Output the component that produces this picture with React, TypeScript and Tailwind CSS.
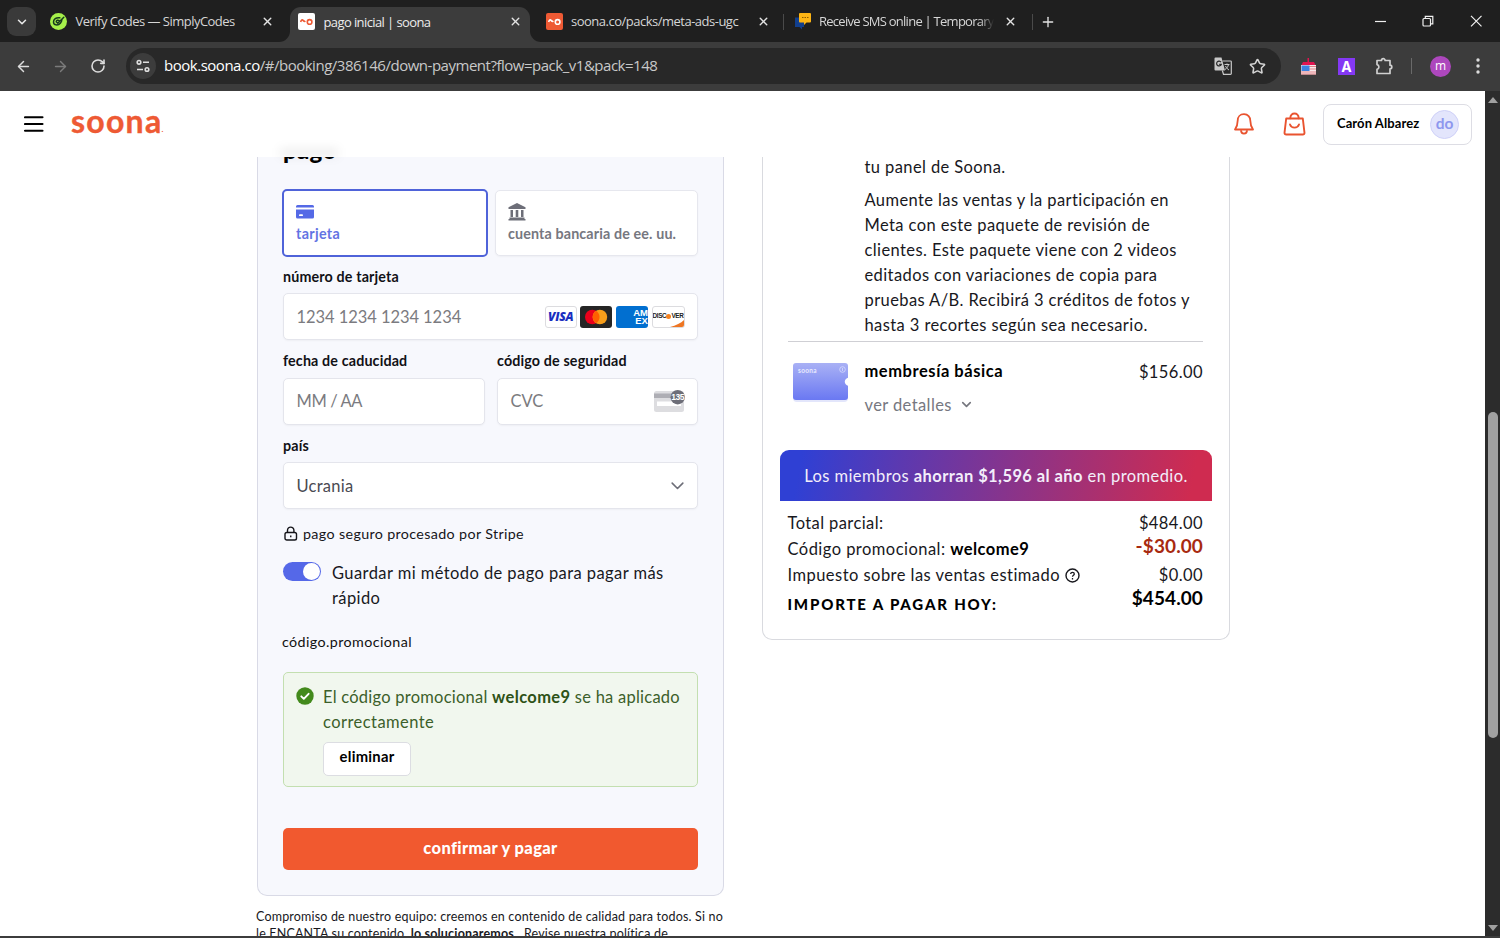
import React from "react";
import { ArrowLeft, ArrowRight, RotateCw, Star, ChevronDown, X, Plus } from "lucide-react";

function SoonaMark({ fg }: { fg: string }) {
  return (
    <svg width="13" height="8" viewBox="0 0 13 8" fill="none" stroke={fg} strokeWidth="1.6">
      <path d="M.6 4C1.400 1.600 2.300 1.500 3.100 2.400S4.500 3.800 5.400 3.200" />
      <circle cx="9.600" cy="3.900" r="2.300" />
    </svg>
  );
}

function TabClose({ className = "" }: { className?: string }) {
  return <X className={"shrink-0 " + className} size={13} strokeWidth={2.6} color="#e3e3e3" />;
}

function TabStrip() {
  return (
    <div className="flex h-[42px] shrink-0 bg-[#1f1f1f] font-['Open_Sans',sans-serif] text-[13px] text-[#d6d6d6]">
      <div className="mt-[7px] ml-[7px] flex h-[29px] w-[29px] shrink-0 items-center justify-center rounded-[9px] bg-[#3a3a3a]">
        <ChevronDown size={14} strokeWidth={2.6} color="#e8e8e8" />
      </div>
      <div className="flex h-[43px] w-[254px] shrink-0 items-center pl-[14px]">
        <svg width="17" height="17" viewBox="0 0 17 17" className="shrink-0">
          <circle cx="8.500" cy="8.500" r="8.500" fill="#a6f04a" />
          <g fill="none" stroke="#173a1e" strokeWidth="1.500" strokeLinecap="round" strokeLinejoin="round">
            <path d="M9.800 4.800C6 4.300 3.500 6.200 3.500 9c0 3.200 4.500 4 6.800 1.200 1-1.300 1.500-2.500 1.500-3.500" />
            <path d="M6.200 8.800l1.600 1.400L13.800 4.300M6.200 8.800c.2-1.600 1.800-2 3-1.200" />
          </g>
        </svg>
        <span className="ml-[8.500px] w-[185.500px] pt-px whitespace-nowrap tracking-[-0.520px]">Verify Codes — SimplyCodes</span>
        <TabClose />
      </div>
      <div className="relative mt-[7px] flex h-[35px] w-[240px] shrink-0 items-center rounded-t-[11px] bg-[#3c3c3c] pb-[5px] pl-2">
        <svg className="absolute bottom-0 left-[-11px]" width="11" height="11" viewBox="0 0 11 11"><path d="M11 0A11 11 0 010 11h11z" fill="#3c3c3c" /></svg>
        <svg className="absolute right-[-11px] bottom-0" width="11" height="11" viewBox="0 0 11 11"><path d="M0 0a11 11 0 0011 11H0z" fill="#3c3c3c" /></svg>
        <div className="mb-px flex h-[17px] w-[17px] shrink-0 items-center justify-center rounded-[2px] bg-white">
          <SoonaMark fg="#ee5a34" />
        </div>
        <span className="ml-[8.500px] w-[185.500px] pt-px whitespace-nowrap tracking-[-0.600px] text-[#ededed]">pago inicial | soona</span>
        <TabClose className="mb-px" />
      </div>
      <div className="flex h-[43px] w-[250px] shrink-0 items-center pl-4">
        <div className="flex h-[17px] w-[17px] shrink-0 items-center justify-center rounded-[2px] bg-[#ee5a34]">
          <SoonaMark fg="#fff" />
        </div>
        <span className="ml-2 w-[186px] shrink-0 pt-px whitespace-nowrap tracking-[-0.500px]">soona.co/packs/meta-ads-ugc</span>
        <TabClose />
      </div>
      <div className="flex h-[43px] shrink-0 items-center">
        <div className="ml-[3px] h-4 w-px bg-[#4a4a4a]" />
        <svg width="17" height="17" viewBox="0 0 17 17" className="ml-[10px] shrink-0">
          <path d="M1 4.500h9V14H8v2.500L5.500 14H1z" fill="#123f8c" />
          <path d="M6 0h10a1 1 0 011 1v7.500a1 1 0 01-1 1h-3.500L10 12V9.500H6a1 1 0 01-1-1V1a1 1 0 011-1z" fill="#fdb515" />
          <path d="M8 4.500h1.500M10.500 4.500H12M13 4.500h1.500" stroke="#8a5a00" strokeWidth="1.200" />
        </svg>
        <span className="ml-[8px] w-[175px] overflow-hidden mask-r-from-92% mask-r-to-100% pt-px whitespace-nowrap tracking-[-0.740px]">Receive SMS online | Temporary</span>
        <TabClose className="ml-[10px]" />
        <div className="ml-[15px] h-4 w-px bg-[#4a4a4a]" />
        <Plus className="ml-[7px]" size={16} strokeWidth={2} color="#e3e3e3" />
      </div>
      <div className="ml-auto flex h-[42px] shrink-0 items-center pr-[18px]">
        <svg width="109" height="12" viewBox="0 0 109 12" fill="none" stroke="#f0f0f0" strokeWidth="1.200">
          <path d="M2 6.500h11" />
          <rect x="50" y="3.500" width="7.500" height="7.500" rx="1" />
          <path d="M52.300 3.500v-2.200h7.500v7.500H57.500" />
          <path d="M98 .800l10.500 10.500M108.500.800L98 11.300" />
        </svg>
      </div>
    </div>
  );
}

function Toolbar() {
  return (
    <div className="flex h-[49px] shrink-0 items-center bg-[#3c3c3c] pb-px font-['Open_Sans',sans-serif]">
      <ArrowLeft className="ml-[15px]" size={17} strokeWidth={2.100} color="#dcdcdc" />
      <ArrowRight className="ml-[20px]" size={17} strokeWidth={2} color="#7b7b7b" />
      <RotateCw className="ml-[21px]" size={16} strokeWidth={2.400} color="#dcdcdc" />
      <div className="ml-[20px] flex h-[36px] w-[1155px] items-center rounded-full bg-[#282828] pl-[4px]">
        <div className="flex h-[26px] w-[26px] items-center justify-center rounded-full bg-[#3c3c3c]">
          <svg width="14" height="14" viewBox="0 0 14 14" fill="none" stroke="#dedede" strokeWidth="1.600">
            <circle cx="3" cy="3.300" r="1.800" />
            <path d="M7 3.300h6M1 10.500h6" />
            <circle cx="11" cy="10.500" r="1.800" />
          </svg>
        </div>
        <span className="ml-[8px] pb-px whitespace-nowrap text-[15px] tracking-[-0.480px] text-[#c8c8c8]">
          <span className="text-white">book.soona.co</span>/#/booking/386146/down-payment?flow=pack_v1&amp;pack=148
        </span>
        <svg className="ml-auto" width="18" height="18" viewBox="0 0 18 18">
          <path d="M1.500.5h6l3.500 13H1.500a1 1 0 01-1-1v-11a1 1 0 011-1z" fill="#c8c8c8" />
          <path d="M8.500 4h8a.8.8 0 01.8.8v11.700a.8.800 0 01-.8.800H9.500L8.300 13.500" fill="none" stroke="#c8c8c8" strokeWidth="1.200" />
          <path d="M7 5.200A2.400 2.400 0 107.300 7.300H5.200" fill="none" stroke="#282828" strokeWidth="1.200" />
          <path d="M10.500 7.500h5M13 6.500v1M14.500 7.500c-.5 2.500-2 4-3.500 5M11.500 9c1 2 2 3 3.500 4" fill="none" stroke="#c8c8c8" strokeWidth="1" />
        </svg>
        <Star className="mr-[15px] ml-[17px]" size={17} strokeWidth={2.200} color="#d4d4d4" />
      </div>
      <svg className="ml-[19px]" width="17" height="17" viewBox="0 0 17 17">
        <path d="M7.500 0h1.500v4h5l2 4H1l2-4h4.500z" fill="#e0144f" />
        <rect x="1" y="7" width="15" height="9.500" fill="#f5e9ea" />
        <path d="M9 8.500h7M9 11h7M1 14h15M1 16h15" stroke="#e58188" strokeWidth="1" />
        <rect x="1.500" y="7.500" width="8" height="5.500" fill="#3b82e0" />
      </svg>
      <div className="ml-[21px] flex h-[17px] w-[17px] items-center justify-center bg-[#8438f4] font-['Inter',sans-serif] text-[14px] font-bold text-white">A</div>
      <svg className="ml-[20px]" width="19" height="19" viewBox="0 0 19 19" fill="none" stroke="#d0d0d0" strokeWidth="1.700" strokeLinejoin="round">
        <path d="M2 3.500h4.500a1.800 1.800 0 013.600 0H15v4.700a1.800 1.800 0 010 3.600v4.700H2v-4.200a2.400 2.400 0 000-4.700z" />
      </svg>
      <div className="ml-[17px] h-4 w-px bg-[#6a6a6a]" />
      <div className="ml-[18px] flex h-[21px] w-[21px] items-center justify-center rounded-full bg-[#ad47bd] pb-px text-[12px] text-white">m</div>
      <svg className="ml-[25px]" width="4" height="16" viewBox="0 0 4 16" fill="#dcdcdc">
        <circle cx="2" cy="2" r="1.700" />
        <circle cx="2" cy="8" r="1.700" />
        <circle cx="2" cy="14" r="1.700" />
      </svg>
    </div>
  );
}

function SiteHeader() {
  return (
    <header className="relative flex h-[66px] shrink-0 items-center bg-white">
      <div className="absolute top-[57px] left-[280px] h-[9px] w-[58px] bg-[#00000010] blur-[5px]" />
      <svg className="ml-[24px]" width="20" height="16" viewBox="0 0 20 16" stroke="#000" strokeWidth="2.100" strokeLinecap="round">
        <path d="M1 1.300h17.500M1 8h17.500M1 14.700h17.500" />
      </svg>
      <div className="ml-[27px] flex h-[40px] items-center pb-[7px] text-[32px] font-bold tracking-[1.250px] text-[#ee5a34]">
        <span className="[-webkit-text-stroke:0.4px_#ee5a34]">soona</span>
        <span className="mt-[17px] ml-[-1px] text-[8px]">.</span>
      </div>
      <svg className="ml-auto" width="20" height="22" viewBox="0 0 20 22" fill="none" stroke="#e9532f" strokeWidth="1.800" strokeLinejoin="round">
        <path d="M10 1.200c-4 0-6.300 2.900-6.300 6.300 0 4.500-1 6.500-2.700 9h18c-1.700-2.500-2.700-4.500-2.700-9 0-3.400-2.300-6.300-6.300-6.300z" />
        <path d="M7 17.200c0 4.500 6 4.500 6 0" />
      </svg>
      <svg className="ml-[29px]" width="23" height="24" viewBox="0 0 23 24" fill="none" stroke="#e9532f" strokeWidth="1.900" strokeLinejoin="round" strokeLinecap="round">
        <path d="M3.200 6.500h16.600l1.700 14.300a1.600 1.600 0 01-1.600 1.700H3.100a1.600 1.600 0 01-1.600-1.700z" />
        <path d="M7.300 6.300c0-6.400 8.400-6.400 8.400 0M7 12.500c1.500 4.200 7.500 4.200 9 0" />
      </svg>
      <div className="mt-px mr-[13px] ml-[17px] flex h-[41px] w-[149px] items-center rounded-[8px] border border-[#dddde4] pl-[13px]">
        <span className="w-[93px] whitespace-nowrap pb-[2px] text-[13px] font-bold tracking-[0.080px] text-black">Carón Albarez</span>
        <span className="flex h-[29px] w-[29px] items-center justify-center rounded-full border border-[#cfd1f8] bg-[#e3e5fc] pb-px text-[15.500px] font-bold text-[#8d97ee]">do</span>
      </div>
    </header>
  );
}

function Label({ children }: { children: React.ReactNode }) {
  return <div className="h-[37.500px] pt-[10px] text-[14.300px] leading-[22px] font-bold tracking-[0.140px] whitespace-nowrap text-[#111116]">{children}</div>;
}

const field = "flex h-[47px] items-center rounded-[5px] border border-[#e4e5ec] bg-white px-[12.500px] pt-px text-[16.500px] shadow-[0_1px_2px_rgba(0,0,0,0.04)]";

function CardLogos() {
  return (
    <div className="ml-auto flex gap-[3.600px]">
      <div className="flex h-[22px] w-[32px] items-center justify-center rounded-[3px] border border-[#dcdcdf] bg-white font-['Open_Sans',sans-serif] text-[12px] font-extrabold tracking-[-0.200px] text-[#1a2fc0] italic">VISA</div>
      <svg width="32" height="22" viewBox="0 0 32 22">
        <rect width="32" height="22" rx="3" fill="#252525" />
        <circle cx="12.300" cy="11" r="7.300" fill="#eb001b" />
        <circle cx="19.900" cy="11" r="7.300" fill="#f79e1b" />
        <path d="M16.100 4.800a7.300 7.300 0 010 12.400 7.300 7.300 0 010-12.400z" fill="#ff5f00" />
      </svg>
      <div className="flex h-[22px] w-[32px] flex-col items-end overflow-hidden rounded-[3px] bg-[#016fd0] pt-[3px] font-['Liberation_Sans',sans-serif] text-[9.500px] leading-[8px] font-bold text-white">
        <span>AM</span>
        <span>EX</span>
      </div>
      <div className="relative flex h-[22px] w-[33px] items-center justify-center overflow-hidden rounded-[3px] border border-[#dcdcdf] bg-white pb-[2px] font-['Liberation_Sans',sans-serif] text-[6.400px] font-bold tracking-[-0.350px] text-[#222]">
        <span>DISC</span>
        <i className="h-[5px] w-[5px] shrink-0 rounded-full bg-[#f58220]" />
        <span>VER</span>
        <svg className="absolute right-0 bottom-0" width="14" height="7" viewBox="0 0 14 7"><path d="M0 7C6 5.500 11 3 14 0v7z" fill="#ee7623" /></svg>
      </div>
    </div>
  );
}

function PaymentCard() {
  return (
    <div className="h-[739px] w-[467px] shrink-0 rounded-b-[10px] border border-t-0 border-[#d9dae6] bg-[#f7f8fd] px-[25px]">
      <h2 className="mt-[-21px] h-[53px] text-[24px] leading-[28px] font-black tracking-[0.300px] text-black">pago</h2>
      <div className="ml-[-1px] flex gap-[7px]">
        <div className="flex h-[68px] w-[206px] flex-col justify-center rounded-[5px] border-2 border-[#4f63d9] bg-white pt-[4px] pl-[12px]">
          <svg width="18" height="14" viewBox="0 0 18 14">
            <path d="M1.500 0h15A1.500 1.500 0 0118 1.500V2.500H0V1.500A1.500 1.500 0 011.500 0zM0 4.500h18v7.500a1.500 1.500 0 01-1.500 1.500h-15A1.500 1.500 0 010 12z" fill="#5469e6" />
            <rect x="3" y="9.300" width="4" height="1.800" rx=".9" fill="#fff" />
          </svg>
          <span className="mt-[4px] text-[14.300px] leading-[22px] font-bold tracking-[0.350px] text-[#6373e3]">tarjeta</span>
        </div>
        <div className="mt-px flex h-[66px] w-[203px] flex-col justify-center rounded-[5px] border border-[#e6e7ee] bg-white pt-[2px] pl-[12px] shadow-[0_1px_2px_rgba(0,0,0,0.04)]">
          <svg width="18" height="18" viewBox="0 0 18 18" fill="#6d6e78">
            <path d="M9 0l8.500 4.200V6H.5V4.200zM2.500 7h2.500v7H2.500zM7.700 7h2.600v7H7.700zM13 7h2.500v7H13zM1.500 14.500h15V16H1.500zM.5 16h17v1.500H.5z" />
          </svg>
          <span className="mt-[2px] text-[14.300px] leading-[22px] font-bold tracking-[0.130px] whitespace-nowrap text-[#76777f]">cuenta bancaria de ee. uu.</span>
        </div>
      </div>
      <div className="mt-[-1px]" />
      <Label>número de tarjeta</Label>
      <div className={field + " mt-[-0.500px] text-[#7b7b80]"}>
        <span className="tracking-[-0.060px] whitespace-nowrap">1234 1234 1234 1234</span>
        <CardLogos />
      </div>
      <div className="flex gap-[12px]">
        <div className="w-[202px]">
          <Label>fecha de caducidad</Label>
          <div className={field + " tracking-[-0.400px] text-[#7b7b80]"}>MM / AA</div>
        </div>
        <div className="w-[201px]">
          <Label>código de seguridad</Label>
          <div className={field + " text-[#7b7b80]"}>
            <span>CVC</span>
            <svg className="ml-auto" width="32" height="24" viewBox="0 0 32 24">
              <rect x="1" y="1" width="30" height="21" rx="2.500" fill="#dddde0" />
              <rect x="1" y="3.500" width="30" height="4.500" fill="#aeaeb4" />
              <rect x="4" y="11.500" width="24" height="4.500" fill="#fff" />
              <circle cx="24.700" cy="7.200" r="7.200" fill="#6d6e78" />
              <text x="24.700" y="10.200" fontSize="8.500" fontWeight="700" fontFamily="Liberation Sans" fill="#fff" textAnchor="middle" letterSpacing="-.5">135</text>
            </svg>
          </div>
        </div>
      </div>
      <Label>país</Label>
      <div className={field + " tracking-[0.250px] text-[#4a4a52]"}>
        <span>Ucrania</span>
        <svg className="mr-px ml-auto" width="13" height="8" viewBox="0 0 14 9" fill="none" stroke="#6d6e78" strokeWidth="1.800" strokeLinecap="round" strokeLinejoin="round"><path d="M1 1.300l6 6 6-6" /></svg>
      </div>
      <div className="mt-[13.500px] flex h-[22px] items-center text-[14.300px] tracking-[0.350px] text-[#15151a]">
        <svg className="mr-[5px] ml-px" width="14" height="16" viewBox="0 0 14 16" fill="none" stroke="#15151a" strokeWidth="1.400">
          <rect x="1" y="6.500" width="11.500" height="7.500" rx="1.800" />
          <path d="M3.500 6.500V4.300a3.200 3.200 0 016.400 0v2.200M6.750 9.500v1.800" />
        </svg>
        pago seguro procesado por Stripe
      </div>
      <div className="mt-[16px] flex">
        <div className="mt-px flex h-[19px] w-[38px] shrink-0 items-center justify-end rounded-full bg-[#5568e8] px-px">
          <div className="h-[17px] w-[17px] rounded-full bg-white" />
        </div>
        <div className="ml-[11px] w-[350px] text-[16.500px] leading-[25px] tracking-[0.420px] text-[#18181d]">Guardar mi método de pago para pagar más rápido</div>
      </div>
      <div className="mt-[20px] ml-[-1px] h-[22px] text-[14.300px] leading-[22px] tracking-[0.400px] text-[#111]">código.promocional</div>
      <div className="mt-[19px] flex h-[115px] rounded-[5px] border border-[#c3dfb0] bg-[#f1f7ee] pt-[12px] pl-[12px]">
        <svg className="mt-[2px] shrink-0" width="18" height="18" viewBox="0 0 18 18"><circle cx="9" cy="9" r="8.700" fill="#438a1c" /><path d="M5.300 9.300l2.500 2.500 4.800-5" fill="none" stroke="#fff" strokeWidth="1.900" strokeLinecap="round" strokeLinejoin="round" /></svg>
        <div className="ml-[9px] text-[16.500px] leading-[25px] tracking-[0.240px] text-[#3c5f2a]">
          <div className="whitespace-nowrap">El código promocional <b className="tracking-[0.350px] text-[#2e5217]">welcome9</b> se ha aplicado</div>
          <div className="tracking-[0.450px]">correctamente</div>
          <div className="mt-[7px] flex h-[34px] w-[88px] items-center justify-center rounded-[5px] border border-[#dcdde2] bg-white pb-[4px] text-[14.800px] font-bold tracking-[0.250px] text-black">eliminar</div>
        </div>
      </div>
      <div className="mt-[41px] flex h-[42px] items-center justify-center rounded-[5px] bg-[#f1592f] text-[16.500px] font-black tracking-[0.350px] text-white">confirmar y pagar</div>
    </div>
  );
}

function Row({ label, value, className = "" }: { label: React.ReactNode; value: string; className?: string }) {
  return (
    <div className="flex h-[26px] items-start justify-between leading-[25px] whitespace-nowrap">
      <span className="flex items-center">{label}</span>
      <span className={className}>{value}</span>
    </div>
  );
}

function SummaryCard() {
  return (
    <div className="ml-[38px] h-[483px] w-[468px] shrink-0 rounded-b-[10px] border border-t-0 border-[#d9dadf] bg-white pr-[26px] pl-[25px] text-[16.500px] tracking-[0.400px] text-[#18181d]">
      <div className="mt-[-2px] ml-[76.500px] leading-[25px] whitespace-nowrap">
        <p>tu panel de Soona.</p>
        <p className="mt-[8px]">Aumente las ventas y la participación en<br />Meta con este paquete de revisión de<br />clientes. Este paquete viene con 2 videos<br />editados con variaciones de copia para<br />pruebas A/B. Recibirá 3 créditos de fotos y<br />hasta 3 recortes según sea necesario.</p>
      </div>
      <div className="mt-[3px] h-px bg-[#cfcfd4]" />
      <div className="flex h-[108px] pt-[17px]">
        <svg className="mt-px ml-[2px]" width="62" height="46" viewBox="0 0 62 46">
          <defs><linearGradient id="pass" x1="0" y1="0" x2="0" y2="1"><stop offset="0" stopColor="#a9b1f5" /><stop offset="1" stopColor="#6a78f2" /></linearGradient></defs>
          <rect x="3" y="4" width="55" height="38" rx="4" fill="#8f9af0" opacity=".25" />
          <path d="M6 3h49a3 3 0 013 3v31a3 3 0 01-3 3H6a3 3 0 01-3-3V6a3 3 0 013-3z" fill="url(#pass)" />
          <path d="M58.500 17.500c-5 1.500-5 7 0 8.500z" fill="#fff" />
          <circle cx="52.500" cy="9.500" r="2.800" fill="none" stroke="#d7dbfc" strokeWidth=".8" />
          <path d="M52.500 8v3" stroke="#d7dbfc" strokeWidth=".8" />
          <text x="8" y="12.500" fontSize="6.500" fontWeight="700" fontFamily="Lato" fill="#e8eafe" letterSpacing=".3">soona</text>
        </svg>
        <div className="ml-[12.500px]">
          <div className="text-[16.500px] leading-[25px] font-bold tracking-[0.550px] text-black">membresía básica</div>
          <div className="mt-[9px] flex items-center leading-[25px] text-[#76777f]">ver detalles <ChevronDown className="mb-[2px] ml-[7px]" size={15} strokeWidth={2.600} /></div>
        </div>
        <div className="ml-auto leading-[27px] tracking-[0.400px]">$156.00</div>
      </div>
      <div className="mr-[-9px] ml-[-8px] flex h-[51px] items-center justify-center rounded-t-[9px] bg-linear-[100deg,#2f40d4_5%,#5c39b0_28%,#97327f_62%,#cf2b50_95%] pt-px tracking-[0.420px] whitespace-nowrap text-[#f3eefa]">
        <span>Los miembros <b>ahorran $1,596 al año</b> en promedio.</span>
      </div>
      <div className="mt-[10px] ml-[-0.500px]">
        <Row label="Total parcial:" value="$484.00" className="tracking-[0.400px]" />
        <Row label={<span className="tracking-[0.460px]">Código promocional: <b className="text-black">welcome9</b></span>} value="-$30.00" className="mt-[-4px] text-[19px] font-bold tracking-[0.100px] text-[#a82a10]" />
        <Row
          label={<><span className="tracking-[0.460px]">Impuesto sobre las ventas estimado</span> <svg className="mb-px ml-[5px]" width="15" height="15" viewBox="0 0 15 15"><circle cx="7.500" cy="7.500" r="6.500" fill="none" stroke="#18181d" strokeWidth="1.400" /><path d="M5.700 6c0-2.200 3.600-2.200 3.600 0 0 1.300-1.800 1.200-1.800 2.700M7.500 10v1.400" fill="none" stroke="#18181d" strokeWidth="1.300" /></svg></>}
          value="$0.00"
          className="tracking-[0.400px]"
        />
        <Row label={<span className="pt-[3px] text-[15px] font-black tracking-[1.820px] text-black">IMPORTE A PAGAR HOY:</span>} value="$454.00" className="mt-[-4px] text-[19px] font-bold tracking-[0.100px] text-black" />
      </div>
    </div>
  );
}

function Scrollbar() {
  return (
    <div className="flex w-[15px] shrink-0 flex-col items-center bg-[#2c2c2c] pt-[6px]">
      <svg width="10" height="6" viewBox="0 0 10 6" fill="#a0a0a0"><path d="M5 0l5 6H0z" /></svg>
      <div className="mt-[309px] h-[326px] w-[10px] rounded-full bg-[#a0a0a0]" />
      <svg className="mt-[187px]" width="10" height="6" viewBox="0 0 10 6" fill="#a0a0a0"><path d="M0 0h10L5 6z" /></svg>
    </div>
  );
}

export default function App() {
  return (
    <div className="flex h-[938px] w-[1500px] flex-col overflow-hidden bg-[#3c3c3c] font-['Lato',sans-serif]">
      <TabStrip />
      <Toolbar />
      <div className="flex h-[845px] shrink-0">
        <div className="flex w-[1485px] flex-col overflow-hidden bg-white">
          <SiteHeader />
          <main className="h-[779px] overflow-hidden pl-[257px]">
            <div className="flex items-start">
              <PaymentCard />
              <SummaryCard />
            </div>
            <p className="mt-[13px] ml-[-1px] text-[12.500px] leading-[16.500px] tracking-[0.180px] whitespace-nowrap text-[#18181d]">
              Compromiso de nuestro equipo: creemos en contenido de calidad para todos. Si no<br />
              le ENCANTA su contenido, <b>lo solucionaremos.</b>&nbsp; Revise nuestra política de
            </p>
          </main>
        </div>
        <Scrollbar />
      </div>
    </div>
  );
}
